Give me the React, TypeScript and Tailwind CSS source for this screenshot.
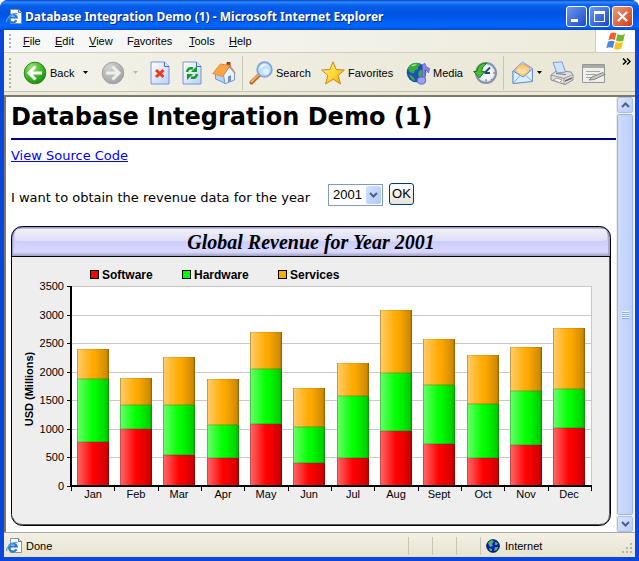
import React from "react";

const months = ["Jan", "Feb", "Mar", "Apr", "May", "Jun", "Jul", "Aug", "Sept", "Oct", "Nov", "Dec"];
// Cumulative revenue per month: [software, + hardware, + services]
const revenue = [
  [770, 1870, 2400], [990, 1420, 1890], [545, 1420, 2260], [495, 1060, 1875],
  [1085, 2040, 2700], [400, 1035, 1715], [495, 1580, 2150], [960, 1980, 3080],
  [740, 1770, 2570], [495, 1440, 2290], [720, 1655, 2430], [1015, 1690, 2765],
];
const series = [
  { name: "Software", color: "#ff0000", x: 79 },
  { name: "Hardware", color: "#00ff00", x: 171 },
  { name: "Services", color: "#ffaa00", x: 267 },
];

function Chart() {
  const y = (v: number) => Math.round(260 - (v * 200) / 3500);
  return (
    <svg viewBox="0 0 600 300" width="600" height="300" className="block shrink-0" role="img" aria-label="Global Revenue for Year 2001">
      <defs>
        <linearGradient id="shade">
          <stop offset="0" stopColor="#fff" stopOpacity=".42" />
          <stop offset=".5" stopColor="#fff" stopOpacity="0" />
          <stop offset=".55" stopColor="#000" stopOpacity="0" />
          <stop offset="1" stopColor="#000" stopOpacity=".22" />
        </linearGradient>
        <linearGradient id="head" x2="0" y2="1">
          <stop offset="0" stopColor="#c8c8fa" />
          <stop offset=".5" stopColor="#ccccff" />
          <stop offset=".87" stopColor="#d9d9ff" />
          <stop offset="1" stopColor="#9c9cbc" />
        </linearGradient>
        <linearGradient id="gloss" x2="0" y2="1">
          <stop offset="0" stopColor="#f0f0f6" />
          <stop offset="1" stopColor="#dedef8" />
        </linearGradient>
        <clipPath id="card"><rect x="0" y="0" width="600" height="300" rx="11" /></clipPath>
      </defs>
      <g clipPath="url(#card)">
        <rect width="600" height="300" fill="#eeeeee" />
        <rect width="600" height="30" fill="url(#head)" />
        <path d="M1.500 30V12Q1.500 1.500 12 1.500H588Q598 1.500 598 12V30" fill="none" stroke="#9c9cc4" strokeWidth="1.500" />
        <rect x="4" y="3" width="592" height="12" rx="4" fill="url(#gloss)" />
        <rect y="30" width="600" height="1" fill="#000" />
        <path d="M598.500 31V288Q598.500 298.500 588 298.500H12Q4 298.500 2 292" fill="none" stroke="#5a5a5a" />
      </g>
      <rect x=".5" y=".5" width="599" height="299" rx="11" fill="none" stroke="#000" />
      <text x="300" y="23" textAnchor="middle" className="text-[20px] font-bold italic font-['Liberation_Serif',serif]">Global Revenue for Year 2001</text>
      {series.map((s) => (
        <g key={s.name}>
          <rect x={s.x + 0.5} y="44.5" width="8" height="8" fill={s.color} stroke="#000" />
          <text x={s.x + 12} y="53" className="text-[12px] font-bold">{s.name}</text>
        </g>
      ))}
      <text transform="translate(22 163) rotate(-90)" textAnchor="middle" className="text-[11px] font-bold">USD (Millions)</text>
      <rect x="60" y="60" width="521" height="200" fill="#fff" />
      {[0, 500, 1000, 1500, 2000, 2500, 3000, 3500].map((v) => (
        <g key={v}>
          <rect x="61" y={y(v)} width="520" height="1" fill="#c8c8c8" />
          <rect x="56" y={y(v)} width="4" height="1" fill="#000" />
          <text x="53" y={y(v) + 4} textAnchor="end" className="text-[11px]">{v}</text>
        </g>
      ))}
      <rect x="580" y="60" width="1" height="200" fill="#c8c8c8" />
      {months.map((m, i) => {
        const x = Math.round(60 + (i * 520) / 12 + 5.7);
        return (
          <g key={m}>
            {revenue[i].map((v, k) => {
              const top = y(v);
              const bottom = k ? y(revenue[i][k - 1]) : 260;
              return (
                <g key={k}>
                  <rect x={x} y={top} width="32" height={bottom - top} fill={series[k].color} />
                  <rect x={x} y={top} width="32" height={bottom - top} fill="url(#shade)" />
                  <rect x={x} y={top} width="1" height={bottom - top} fill="#000" opacity=".24" />
                  <rect x={x + 31} y={top} width="1" height={bottom - top} fill="#000" opacity=".24" />
                  <rect x={x + 30} y={top + 1} width="1" height={bottom - top - 2} fill="#000" opacity=".08" />
                  <rect x={x} y={top} width="32" height="1" fill="#000" opacity=".08" />
                  <rect x={x + 1} y={bottom - 1} width="30" height="1" fill="#000" opacity=".14" />
                </g>
              );
            })}
            <text x={x + 16} y="272" textAnchor="middle" className="text-[11px]">{m}</text>
          </g>
        );
      })}
      <rect x="59" y="60" width="2" height="201" fill="#000" />
      <rect x="59" y="259" width="522" height="2" fill="#000" />
      {Array.from({ length: 13 }, (_, i) => (
        <rect key={i} x={Math.round(60 + (i * 520) / 12)} y="261" width="1" height="4" fill="#000" />
      ))}
    </svg>
  );
}

function PageIcon() {
  return (
    <svg width="16" height="16" viewBox="0 0 16 16" className="shrink-0">
      <path d="M4.500 .5H12.500L15.500 3.500V14.500H4.500Z" fill="#fff" stroke="#8a8fa8" />
      <path d="M12.500 .5V3.500H15.500" fill="#ccd6f0" stroke="#6a7290" />
      <path d="M10.500 11.300A4 4 0 1 1 10.800 8.600H3.400" fill="none" stroke="#1e78d8" strokeWidth="2" />
      <path d="M1 13Q-.5 11 4 7Q9 3.300 11.500 5" fill="none" stroke="#4aa4f0" strokeWidth="1.200" />
    </svg>
  );
}

const Arrow = ({ color = "#000" }: { color?: string }) => (
  <svg width="5" height="3" viewBox="0 0 5 3" className="shrink-0"><path d="M0 0H5L2.500 3Z" fill={color} /></svg>
);

function Circle({ on }: { on: boolean }) {
  return (
    <svg width="24" height="24" viewBox="0 0 24 24" className="shrink-0">
      <defs>
        <radialGradient id={on ? "green" : "grey"} cx=".35" cy=".25" r=".8">
          <stop offset="0" stopColor={on ? "#9be07c" : "#d4d4d4"} />
          <stop offset=".6" stopColor={on ? "#3fb526" : "#b4b4b4"} />
          <stop offset="1" stopColor={on ? "#1c8a10" : "#a0a0a0"} />
        </radialGradient>
      </defs>
      <circle cx="12" cy="12" r="10.800" fill={`url(#${on ? "green" : "grey"})`} stroke={on ? "#2a8a1c" : "#a4a4a4"} />
      <path d={on ? "M19 12H6.500M12.500 5.500L6 12L12.500 18.500" : "M5 12H17.500M11.500 5.500L18 12L11.500 18.500"} fill="none" stroke={on ? "#fff" : "#eeeeea"} strokeWidth="3" />
    </svg>
  );
}

function Sheet({ children }: { children: React.ReactNode }) {
  return (
    <svg width="20" height="24" viewBox="0 0 20 24" className="shrink-0">
      <defs><linearGradient id="sheet" x2="1" y2="1"><stop stopColor="#fff" /><stop offset="1" stopColor="#b8d0fa" /></linearGradient></defs>
      <path d="M1 1H14.500L19 5.500V23H1Z" fill="url(#sheet)" stroke="#7a94d0" />
      <path d="M14.500 1V5.500H19" fill="#dce8ff" stroke="#4a6cc0" />
      {children}
    </svg>
  );
}

const Home = () => (
  <svg width="24" height="24" viewBox="0 0 24 24" className="shrink-0">
    <path d="M15 1.500H18V9H15Z" fill="#c83c28" stroke="#8c3020" />
    <path d="M3.500 11L9 8L13.500 13V22.500L3.500 18Z" fill="#b4d2f8" stroke="#7494cc" />
    <path d="M11.500 14L17.500 6L22.500 12V19L13 22.800Z" fill="#eef4ff" stroke="#7494cc" />
    <path d="M.8 12.500L8.500 3L17.800 4.500L10.500 15.500Z" fill="#ffa545" stroke="#e08a38" />
    <path d="M17.800 4.500L23.300 12.500" stroke="#c08860" strokeWidth="1.200" />
    <path d="M16 15.500L19 14.300V20L16 21.300Z" fill="#6c8ce0" />
  </svg>
);

const Search = () => (
  <svg width="24" height="24" viewBox="0 0 24 24" className="shrink-0">
    <path d="M2.500 21.500L10 14" stroke="#b86420" strokeWidth="4" strokeLinecap="round" />
    <path d="M2.500 20.700L9.500 13.700" stroke="#f5ae62" strokeWidth="2" strokeLinecap="round" />
    <circle cx="15.500" cy="8.500" r="7.300" fill="#bfe2fb" stroke="#86a2d8" strokeWidth="1.800" />
    <path d="M10.500 8A5.500 5.500 0 0 1 18 3.800Q13 5 10.500 8Z" fill="#fff" />
    <circle cx="17" cy="10.500" r="3" fill="#dff3ff" />
  </svg>
);

const Star = () => (
  <svg width="24" height="24" viewBox="0 0 24 24" className="shrink-0">
    <defs><linearGradient id="gold" x2="1" y2="1"><stop stopColor="#fff8a8" /><stop offset=".5" stopColor="#ffdb38" /><stop offset="1" stopColor="#eda010" /></linearGradient></defs>
    <path d="M12 .8L15.200 8.500L23.400 9L17.200 14.400L19.600 23L12.200 18.300L4.600 23L6.800 14.400L.6 9L8.900 8.500Z" fill="url(#gold)" stroke="#c88a18" strokeLinejoin="round" />
  </svg>
);

const Media = () => (
  <svg width="24" height="24" viewBox="0 0 24 24" className="shrink-0">
    <circle cx="10.500" cy="11.500" r="9.800" fill="#1c50b8" />
    <path d="M2 7Q5 1.500 11 2L15 4Q11 5 12 8Q8 9 8 12Q3 13 2 7ZM13 10Q17 7 20 11Q19 17 14 18Q11 14 13 10ZM3 14Q8 14 9 20Q5 19 3 14Z" fill="#35ac3c" />
    <path d="M5 5Q8 2.500 11 3.500Q8 6 5 5Z" fill="#a4ee98" />
    <path d="M16.500 3.500L19 2.500Q19.500 7 23.500 7.500L22.500 12Q21.500 9 19 9V20H16.500Z" fill="#8488e8" stroke="#5858c0" strokeWidth=".8" />
    <ellipse cx="15.500" cy="19.500" rx="4.200" ry="3.600" fill="#9c9ff4" stroke="#5c60c8" />
  </svg>
);

const History = () => (
  <svg width="24" height="24" viewBox="0 0 24 24" className="shrink-0">
    <circle cx="13" cy="12" r="10" fill="#ccebff" stroke="#8792a4" strokeWidth="2" />
    <circle cx="13" cy="12" r="7.500" fill="#eaf8ff" />
    <path d="M11.500 12L17 6.500M11.500 12H17" stroke="#2d466e" strokeWidth="1.800" />
    <path d="M13 18V21M20 12H22M18 18L19.500 19.500" stroke="#e47858" strokeWidth="1.500" />
    <path d="M14 2Q4.500 2 4 10.500H.6L6.500 17L11.500 10.500H8.500Q8.500 5.500 14 2Z" fill="#45c031" stroke="#197c16" />
  </svg>
);

const Mail = () => (
  <svg width="22" height="24" viewBox="0 0 22 24" className="shrink-0">
    <path d="M1 10L10.500 1L20.500 7.500V20L1 22.500Z" fill="#b9dbff" stroke="#7c98dc" />
    <path d="M3 10Q7 2 13 4L18 7L17 12L10 16Z" fill="#ffce80" stroke="#e8a852" />
    <path d="M5 9H14M6 11H14" stroke="#fff0ca" />
    <path d="M1 10L11 16L20.500 8V20.500L1 22.500Z" fill="#d7f1ff" stroke="#6b8ad4" />
    <path d="M1 22.500L8 14.500M20.500 20.500L13.500 14" stroke="#83a9e4" />
  </svg>
);

const Printer = () => (
  <svg width="24" height="24" viewBox="0 0 24 24" className="shrink-0">
    <path d="M1 14L7 9.500L21 11L23 14V19L15 23.500L1 19Z" fill="#e0e0e0" stroke="#8c8c8c" />
    <path d="M3 1.500L12 .8L15.500 11L7 12Z" fill="#cfe3ff" stroke="#7f9bd5" />
    <path d="M1 14L14 17.500L23 13.500M14 17.500V23" fill="none" stroke="#9a9a9a" />
    <path d="M6 12.500L16 13.500" stroke="#777" />
    <path d="M3 19L7 17L12 19L9.500 21.500Z" fill="#f8f8f8" stroke="#a0a0a0" />
    <path d="M15 20L22 17" stroke="#6a6a6a" strokeWidth="1.500" />
  </svg>
);

const EditIcon = () => (
  <svg width="24" height="24" viewBox="0 0 24 24" className="shrink-0">
    <path d="M.5 3.500H22.500V21.500H.5Z" fill="#eeeeea" stroke="#969696" />
    <path d="M1 4H22V7H1Z" fill="#aaaaaa" />
    <path d="M4 10.500H18M4 13.500H14M4 16.500H9" stroke="#a4a4a4" />
    <path d="M7 19L10 16L21 11.500L23 13.500L12 18.500Z" fill="#c8c8c8" stroke="#858585" />
  </svg>
);

const Grip = ({ h }: { h: string }) => (
  <div className={`ml-[5px] w-[2px] shrink-0 bg-[repeating-linear-gradient(#b6b2a2_0_2px,transparent_2px_4px)] ${h}`} />
);

const tool = "flex h-7 shrink-0 items-center";

function ScrollButton({ down }: { down?: boolean }) {
  return (
    <button aria-label={down ? "Scroll down" : "Scroll up"} className="flex h-4 w-4 shrink-0 items-center justify-center rounded-[2px] border border-[#a8bff0] bg-linear-to-br from-[#dce6ff] to-[#b8cdfa]">
      <svg width="9" height="6" viewBox="0 0 9 6"><path d={down ? "M1 1L4.500 4.500L8 1" : "M1 5L4.500 1.500L8 5"} fill="none" stroke="#4d6185" strokeWidth="2" /></svg>
    </button>
  );
}

const winBtn = "flex h-[21px] w-[21px] items-center justify-center rounded-[3px] border border-white";
const pane = "flex h-[18px] shrink-0 items-center border-l border-[#c8c5b4]";

export default function App() {
  return (
    <div className="flex min-h-screen w-full flex-col rounded-t-lg bg-[#0a45dc] font-['Liberation_Sans',Arial,sans-serif] text-[11px] leading-4 text-black">
      <header className="flex h-[30px] items-center rounded-t-lg bg-[linear-gradient(#0a3fc0_0,#2e8bff_2px,#0a62ee_5px,#0054e3_12px,#0058ea_18px,#0068ff_26px,#0048cc_30px)] pr-[6px] pl-[6px] pt-[3px]">
        <PageIcon />
        <h1 className="ml-[3px] flex-1 truncate font-['Noto_Sans',sans-serif] text-[12px] font-bold text-white [text-shadow:1px_1px_0_#0a2a80]">Database Integration Demo (1) - Microsoft Internet Explorer</h1>
        <div className="flex gap-[2px]">
          <button aria-label="Minimize" className={`${winBtn} bg-linear-to-br from-[#6d96f2] to-[#1c48c4]`}>
            <span className="mt-2 mr-1 h-[3px] w-[7px] bg-white" />
          </button>
          <button aria-label="Maximize" className={`${winBtn} bg-linear-to-br from-[#6d96f2] to-[#1c48c4]`}>
            <span className="h-[11px] w-[11px] border border-t-[3px] border-white" />
          </button>
          <button aria-label="Close" className={`${winBtn} bg-linear-to-br from-[#f09878] to-[#cc3810]`}>
            <svg width="13" height="13" viewBox="0 0 13 13"><path d="M2 2L11 11M11 2L2 11" stroke="#fff" strokeWidth="2.200" /></svg>
          </button>
        </div>
      </header>

      <div className="mx-1 mb-1 flex flex-1 flex-col bg-[#ece9d8]">
        <nav className="flex h-[23px] items-stretch border-b border-[#d2cdb8] bg-linear-to-r from-[#f8f9fa] to-[#edead9]">
          <div className="flex flex-1 items-center">
            <Grip h="h-[14px]" />
            <button className="ml-3 w-8 text-left"><u>F</u>ile</button>
            <button className="w-[34px] text-left"><u>E</u>dit</button>
            <button className="w-[38px] text-left"><u>V</u>iew</button>
            <button className="w-[62px] text-left">F<u>a</u>vorites</button>
            <button className="w-[40px] text-left"><u>T</u>ools</button>
            <button className="text-left"><u>H</u>elp</button>
          </div>
          <div className="flex w-[40px] items-center justify-center border-l border-[#d2cdb8] bg-white">
            <svg width="20" height="18" viewBox="0 0 20 18">
              <path d="M4 2Q7 -.5 10.300 1.300L8.800 8Q5.500 6.500 2.300 8.500Z" fill="#f06228" />
              <path d="M11.500 2Q15 3.800 19 2L17.300 8.700Q13.500 10.200 10 8.500Z" fill="#76b82c" />
              <path d="M2 9.700Q5.300 7.800 8.500 9.300L6.900 16Q3.500 14.300 .3 16.300Z" fill="#4886e0" />
              <path d="M9.700 10Q13.200 11.500 17 10L15.400 16.500Q11.500 18.500 8 16.700Z" fill="#fbc11c" />
            </svg>
          </div>
        </nav>

        <div className="flex h-[39px] items-center border-b border-[#c5c1ae] bg-linear-to-r from-[#f3f2ea] to-[#e9e6d4] pt-px">
          <Grip h="h-[30px]" />
          <div className="ml-3 flex min-w-0 flex-1 items-center">
            <button className={`${tool} w-[60px] gap-[3px]`}><Circle on />Back</button>
            <button aria-label="Back history" className={`${tool} w-[18px]`}><Arrow /></button>
            <button aria-label="Forward" className={`${tool} w-8`}><Circle on={false} /></button>
            <button aria-label="Forward history" className={`${tool} w-[17px]`}><Arrow color="#bcb9aa" /></button>
            <button aria-label="Stop" className={`${tool} w-8`}>
              <Sheet><path d="M6 9L13.500 16M13.500 9L6 16" stroke="#f03a14" strokeWidth="3" /></Sheet>
            </button>
            <button aria-label="Refresh" className={`${tool} w-[30px]`}>
              <Sheet>
                <path d="M5 11Q6 6 11 7.500" fill="none" stroke="#179a24" strokeWidth="2.500" /><path d="M15 5V11H9Z" fill="#179a24" />
                <path d="M15 13Q14 18 9 16.500" fill="none" stroke="#179a24" strokeWidth="2.500" /><path d="M5 19V13H11Z" fill="#179a24" />
              </Sheet>
            </button>
            <button aria-label="Home" className={`${tool} w-[30px]`}><Home /></button>
            <div className="h-[34px] w-[7px] shrink-0 border-l border-[#c9c6b6]" />
            <button className={`${tool} w-[72px] gap-[3px]`}><Search />Search</button>
            <button className={`${tool} w-[85px] gap-[3px]`}><Star />Favorites</button>
            <button className={`${tool} w-[67px] gap-[3px]`}><Media />Media</button>
            <button aria-label="History" className={`${tool} w-[30px]`}><History /></button>
            <div className="h-[34px] w-[9px] shrink-0 border-l border-[#c9c6b6]" />
            <button aria-label="Mail" className={`${tool} w-[25px]`}><Mail /></button>
            <button aria-label="Mail options" className={`${tool} w-[13px]`}><Arrow /></button>
            <button aria-label="Print" className={`${tool} w-8`}><Printer /></button>
            <button aria-label="Edit" className={tool}><EditIcon /></button>
          </div>
          <button aria-label="More buttons" className="mr-1 flex self-start pt-1">
            <svg width="9" height="7" viewBox="0 0 9 7"><path d="M1 .5L4 3.500L1 6.500M5 .5L8 3.500L5 6.500" fill="none" stroke="#000" strokeWidth="1.500" /></svg>
          </button>
        </div>

        <div className="mt-[3px] flex flex-1 border-t-2 border-l-2 border-[#7d7a6c] bg-white">
          <main className="min-w-0 flex-1 overflow-hidden pl-[5px] font-['DejaVu_Sans',Verdana,sans-serif] text-[13px]">
            <h2 className="mt-[5px] border-b-2 border-[#000080] pb-[6px] text-[24px] leading-[30px] font-bold">Database Integration Demo (1)</h2>
            <a href="#source" className="mt-2 block w-fit text-[#0000ff] underline">View Source Code</a>
            <form className="mt-[18px] flex items-start" onSubmit={(e) => e.preventDefault()}>
              <label htmlFor="year" className="mt-[8px] min-w-[317px]">I want to obtain the revenue data for the year</label>
              <div className="relative mt-[2px]">
                <select id="year" defaultValue="2001" className="block h-[22px] w-[55px] appearance-none border border-[#7f9db9] bg-white pl-1 font-['Liberation_Sans',sans-serif] text-[13px]">
                  <option>2001</option><option>2000</option><option>1999</option>
                </select>
                <span className="pointer-events-none absolute top-[2px] right-[2px] flex h-[18px] w-[15px] items-center justify-center rounded-[2px] bg-linear-to-br from-[#d6e2ff] to-[#b0c8f8]">
                  <svg width="9" height="6" viewBox="0 0 9 6"><path d="M1 1L4.500 4.500L8 1" fill="none" stroke="#4d6185" strokeWidth="2" /></svg>
                </span>
              </div>
              <button className="ml-[6px] mt-px h-[22px] w-[25px] rounded-[3px] border border-[#003c74] bg-linear-to-b from-white to-[#e6e4dc] font-['Liberation_Sans',sans-serif] text-[13px]">OK</button>
            </form>
            <div className="mt-5 mb-[6px] font-['Liberation_Sans',Arial,sans-serif]"><Chart /></div>
          </main>
          <div className="flex w-[19px] shrink-0 flex-col border-l border-[#eeede5] bg-[#f5f5f0] pr-[2px]">
            <ScrollButton />
            <div className="my-px flex w-4 flex-1 flex-col items-center justify-center rounded-[2px] border border-[#98b4ee] bg-linear-to-r from-[#cddcff] to-[#bccffa]">
              <div className="h-[8px] w-[7px] bg-[repeating-linear-gradient(#eef4fe_0_1px,#8cb0f8_1px_2px)]" />
            </div>
            <ScrollButton down />
          </div>
        </div>

        <footer className="flex h-[25px] items-center border-t border-[#aca899] bg-linear-to-b from-[#f3f1e6] to-[#e6e3d0] pt-px pl-[2px]">
          <PageIcon />
          <span className="ml-1 flex-1">Done</span>
          <div className={`${pane} w-6`} />
          <div className={`${pane} w-6`} />
          <div className={`${pane} w-6`} />
          <div className={`${pane} w-[155px] pl-[5px]`}>
            <svg width="14" height="14" viewBox="0 0 14 14" className="mr-[5px]">
              <circle cx="7" cy="7" r="6.300" fill="#1414c8" stroke="#061848" />
              <path d="M2 4Q5 0 8 2L6 5L7 7L4 8ZM9 3L12 4L11 6L9 6ZM9 8L12 8L11 11L8 12ZM3 9L6 10L6 12L4 12Z" fill="#3cc44c" />
            </svg>
            Internet
            <svg width="12" height="12" viewBox="0 0 12 12" className="mt-[6px] mr-px ml-auto"><path d="M8 0h2v2h-2zM4 4h2v2h-2zM8 4h2v2h-2zM0 8h2v2h-2zM4 8h2v2h-2zM8 8h2v2h-2z" fill="#b8b4a2" /></svg>
          </div>
        </footer>
      </div>
    </div>
  );
}
